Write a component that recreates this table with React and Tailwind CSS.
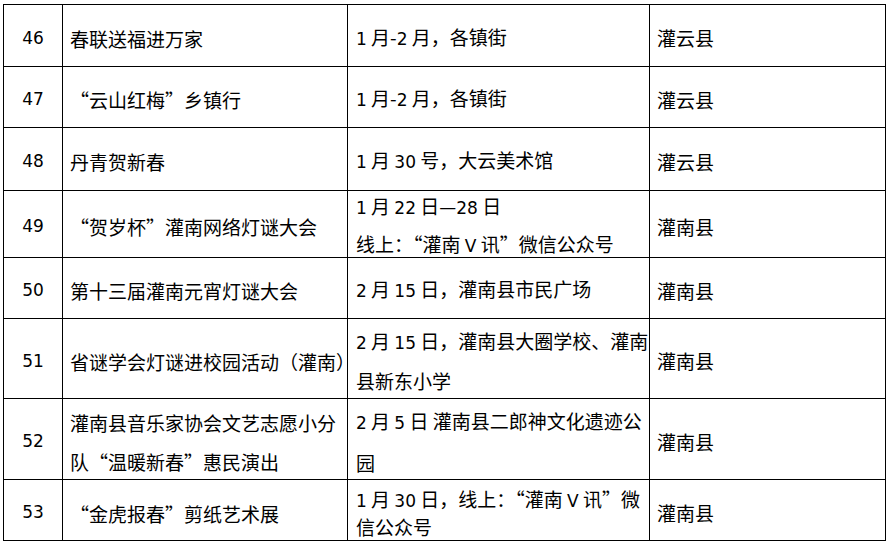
const rows = [
  { no: "46", name: ["春联送福进万家"], place: ["1 月-2 月，各镇街"], area: "灌云县", h: "h-[62px]" },
  { no: "47", name: ["“云山红梅”乡镇行"], place: ["1 月-2 月，各镇街"], area: "灌云县", h: "h-[61px]" },
  { no: "48", name: ["丹青贺新春"], place: ["1 月 30 号，大云美术馆"], area: "灌云县", h: "h-[63px]" },
  { no: "49", name: ["“贺岁杯”灌南网络灯谜大会"], place: ["1 月 22 日—28 日", "线上：“灌南 V 讯”微信公众号"], area: "灌南县", h: "h-[67px]", lead: "leading-[36px]" },
  { no: "50", name: ["第十三届灌南元宵灯谜大会"], place: ["2 月 15 日，灌南县市民广场"], area: "灌南县", h: "h-[61px]" },
  { no: "51", name: ["省谜学会灯谜进校园活动（灌南）"], place: ["2 月 15 日，灌南县大圈学校、灌南", "县新东小学"], area: "灌南县", h: "h-[80px]", lead: "leading-[37px]" },
  { no: "52", name: ["灌南县音乐家协会文艺志愿小分", "队“温暖新春”惠民演出"], place: ["2 月 5 日 灌南县二郎神文化遗迹公", "园"], area: "灌南县", h: "h-[81px]", lead: "leading-[39px]" },
  { no: "53", name: ["“金虎报春”剪纸艺术展"], place: ["1 月 30 日，线上：“灌南 V 讯”微", "信公众号"], area: "灌南县", h: "h-[61px]", lead: "leading-[25px]" },
];

// latin digits in the source look like Verdana, the rest is a CJK face
function Mixed({ text }) {
  const parts = text.split(/(\d+|V)/);
  return parts.map((p, i) =>
    /^(\d+|V)$/.test(p) ? (
      <span key={i} className="font-['DejaVu_Sans'] text-[17px]">{p}</span>
    ) : (
      <span key={i}>{p}</span>
    )
  );
}

function Lines({ lines }) {
  return lines.map((l, i) => (
    <div key={i} className="whitespace-nowrap">
      <Mixed text={l} />
    </div>
  ));
}

export default function App() {
  return (
    <div className="w-[890px] h-[544px] bg-white pt-[4px] pl-[3px] text-black font-['Noto_Sans_CJK_SC',sans-serif] text-[19px]">
      <div className="w-[883px] grid grid-cols-[59px_285px_302px_237px] border-r border-b border-black">
        {rows.map((r) => (
          <div key={r.no} className="contents">
            <div className={`${r.h} border-l border-t border-black flex items-center justify-center pt-[6px] font-['DejaVu_Sans'] text-[17px]`}>
              {r.no}
            </div>
            <div className={`${r.h} ${r.lead || "leading-[26px]"} border-l border-t border-black flex flex-col justify-center pt-[6px] pl-[7px]`}>
              <Lines lines={r.name} />
            </div>
            <div className={`${r.h} ${r.lead || "leading-[26px]"} border-l border-t border-black flex flex-col justify-center pt-[4px] pl-[8px]`}>
              <Lines lines={r.place} />
            </div>
            <div className={`${r.h} border-l border-t border-black flex items-center pt-[6px] pl-[7px]`}>
              {r.area}
            </div>
          </div>
        ))}
      </div>
    </div>
  );
}
